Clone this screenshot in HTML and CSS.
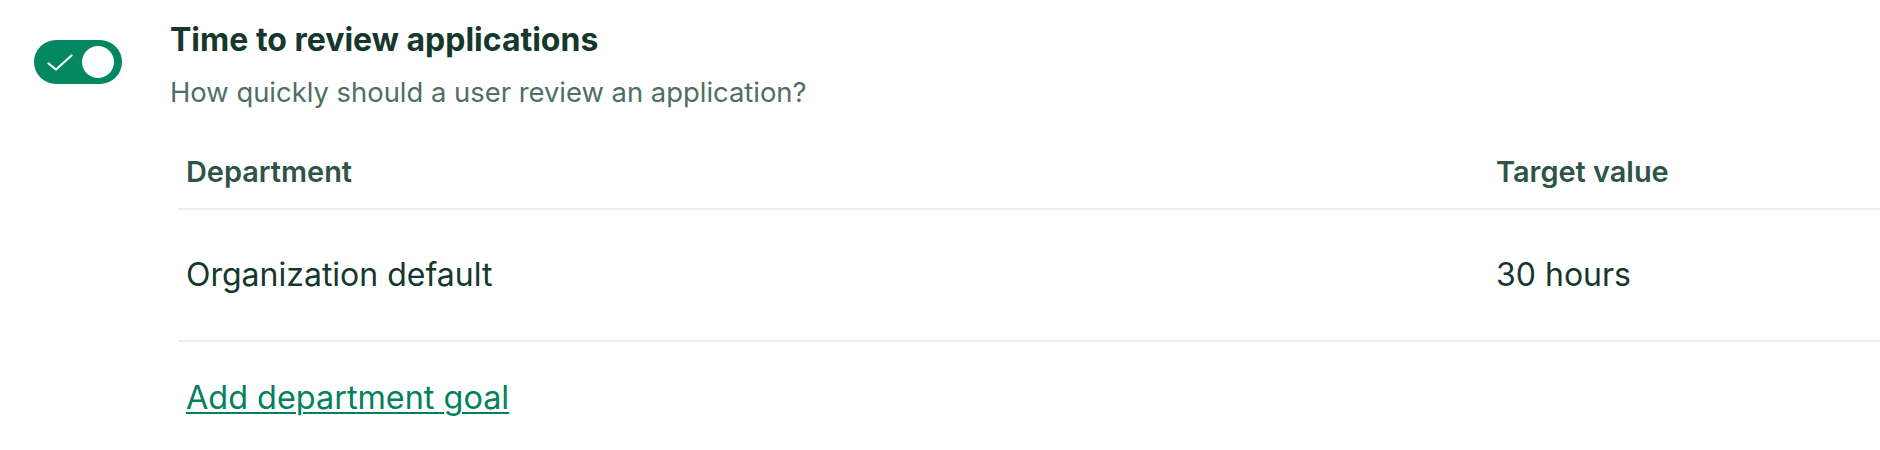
FILE: index.html
```html
<!DOCTYPE html>
<html lang="en">
<head>
<meta charset="utf-8">
<title>Time to review applications</title>
<link rel="stylesheet" href="styles.css">
</head>
<body>
<section class="setting">
  <div class="toggle" role="switch" aria-checked="true">
    <svg class="toggle-check" width="26" height="18" viewBox="0 0 26 18" aria-hidden="true">
      <path d="M1.5 10.5 L9 16.5 L24.5 2.5" fill="none" stroke="#ffffff" stroke-width="2.2" stroke-linecap="round" stroke-linejoin="round"/>
    </svg>
    <span class="toggle-knob"></span>
  </div>
  <div class="setting-body">
    <h2 class="setting-title">Time to review applications</h2>
    <p class="setting-desc">How quickly should a user review an application?</p>
    <div class="goals">
      <div class="goals-head">Department</div>
      <div class="goals-head">Target value</div>
      <div class="goals-cell">Organization default</div>
      <div class="goals-cell">30 hours</div>
    </div>
    <a class="add-link" href="#">Add department goal</a>
  </div>
</section>
</body>
</html>
```
FILE: styles.css
```css
html, body {
  margin: 0;
  padding: 0;
  background: #ffffff;
}

body {
  font-family: Inter, "Noto Sans", "Liberation Sans", sans-serif;
  color: #15372c;
}

.setting {
  display: flex;
  align-items: flex-start;
  padding: 20px 0 0 34px;
}

.toggle {
  flex: none;
  box-sizing: border-box;
  width: 88px;
  height: 44px;
  margin-top: 20px;
  border-radius: 22px;
  background: #038760;
  display: flex;
  align-items: center;
  justify-content: space-between;
  padding: 0 8px 0 13px;
}

.toggle-check {
  display: block;
}

.toggle-knob {
  width: 32px;
  height: 32px;
  border-radius: 50%;
  background: #ffffff;
}

.setting-body {
  flex: 1;
  margin-left: 48px;
}

.setting-title {
  margin: 0;
  font-size: 32px;
  line-height: 40px;
  font-weight: 700;
  color: #15372c;
}

.setting-desc {
  margin: 14px 0 0;
  font-size: 27.4px;
  line-height: 36px;
  color: #4f6e64;
}

.goals {
  display: grid;
  grid-template-columns: 1fr 392px;
  margin: 19px 0 0 8px;
}

.goals-head {
  padding: 25px 8px 18px;
  font-size: 28.9px;
  line-height: 36px;
  font-weight: 600;
  color: #2e5447;
  border-bottom: 2px solid #ededed;
}

.goals-cell {
  padding: 45px 8px 45px;
  font-size: 32px;
  line-height: 40px;
  color: #15372c;
  border-bottom: 2px solid #ededed;
}

.add-link {
  display: inline-block;
  margin: 36px 0 0 16px;
  font-size: 32.4px;
  line-height: 40px;
  color: #04805d;
  text-decoration: underline;
  text-decoration-thickness: 2px;
  text-underline-offset: 3px;
}
```
